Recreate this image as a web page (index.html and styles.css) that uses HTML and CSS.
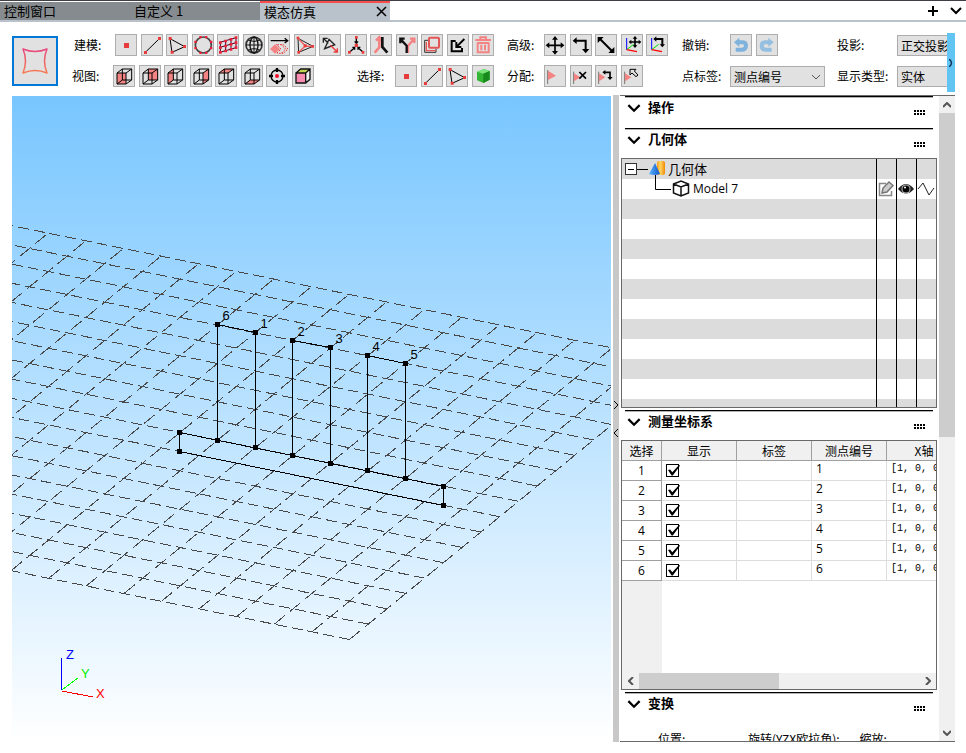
FILE: index.html
```html
<!DOCTYPE html>
<html lang="zh-CN">
<head>
  <meta charset="UTF-8">
  <meta name="viewport" content="width=device-width,initial-scale=1.0">
  <title>模态仿真</title>
  <link rel="stylesheet" href="styles.css">
</head>
<body>
  <svg class="defs" width="0" height="0">
    <symbol id="cube" viewBox="3 3 60 60">
      <path d="M12 24H39V57H12ZM12 24L28 12H56V45L39 57M39 24L56 12M12 57L28 45H56M28 12V45" fill="none" stroke="#000" stroke-width="3"/>
    </symbol>
    <symbol id="point" viewBox="3 3 60 60"><rect x="27" y="27" width="15" height="15" fill="#e83c3c"/></symbol>
    <symbol id="line" viewBox="3 3 60 60">
      <path d="M13 55L55 14" stroke="#000" stroke-width="3"/>
      <path d="M9 51h9v9h-9zM51 9h9v9h-9z" fill="#e83c3c"/>
    </symbol>
    <symbol id="tri" viewBox="3 3 60 60">
      <path d="M12 14L56 38L18 55Z" fill="none" stroke="#000" stroke-width="3"/>
      <path d="M8 9h9v9h-9zM51 33h9v9h-9zM14 50h9v9h-9z" fill="#e83c3c"/>
    </symbol>
    <symbol id="flag" viewBox="3 3 60 60">
      <path d="M11 15V57" stroke="#777" stroke-width="3"/><path d="M12 17L36 32L12 45Z" fill="#f48383"/>
    </symbol>
    <symbol id="flag-low" viewBox="3 3 60 60">
      <path d="M11 20V57" stroke="#777" stroke-width="3"/><path d="M12 25L31 37L12 49Z" fill="#f48383"/>
    </symbol>
    <symbol id="axes" viewBox="3 3 60 60">
      <path d="M17 12V47" stroke="#00f" stroke-width="3"/>
      <path d="M17 47L38 31" stroke="#0d0" stroke-width="3"/>
      <path d="M17 47L48 53" stroke="#f00" stroke-width="4"/>
    </symbol>
    <symbol id="chev" viewBox="0 0 12 8"><path d="M1 1L6 6L11 1" fill="none" stroke="currentColor" stroke-width="2"/></symbol>
    <symbol id="grip" viewBox="0 0 11 5"><path d="M0 1H11M0 4H11" stroke="#000" stroke-width="2" stroke-dasharray="2 1"/></symbol>
  </svg>

  <nav class="tabs">
    <button class="tab">控制窗口</button>
    <button class="tab">自定义 1</button>
    <button class="tab active">模态仿真
      <svg width="11" height="11" viewBox="0 0 11 11"><path d="M1 1L10 10M10 1L1 10" stroke="#000" stroke-width="1.5"/></svg>
    </button>
    <div class="tab-tools">
      <button title="新建"><svg width="10" height="10"><path d="M5 0V10M0 5H10" stroke="#000" stroke-width="2"/></svg></button>
      <button title="更多"><svg width="12" height="8"><use href="#chev"/></svg></button>
    </div>
  </nav>

  <header class="toolbar">
    <button class="logo-btn" title="模型">
      <svg width="30" height="30" viewBox="0 0 30 30">
        <defs><linearGradient id="lg" x1="0" y1="0" x2="0" y2="1"><stop offset="0" stop-color="#e8487e"/><stop offset="1" stop-color="#f77a52"/></linearGradient></defs>
        <path d="M3 3Q15 8 27 3Q22 15 27 27Q15 22 3 27Q8 15 3 3Z" fill="none" stroke="url(#lg)" stroke-width="1.5" stroke-linejoin="round"/>
      </svg>
    </button>

    <div class="group g-model">
      <div class="row">
        <span class="lbl">建模:</span>
        <div class="btns n15">
          <button class="ib"><svg><use href="#point"/></svg></button>
          <button class="ib"><svg><use href="#line"/></svg></button>
          <button class="ib"><svg><use href="#tri"/></svg></button>
          <button class="ib"><svg viewBox="3 3 60 60"><circle cx="34" cy="33" r="24" fill="none" stroke="#444" stroke-width="5"/><path d="M22 6h7v7h-7zM39 6h7v7h-7zM54 20h7v7h-7zM54 39h7v7h-7zM39 53h7v7h-7zM22 53h7v7h-7zM7 39h7v7h-7zM7 20h7v7h-7z" fill="#f0203a"/></svg></button>
          <button class="ib"><svg viewBox="3 3 60 60"><path d="M9 25L57 11M9 40L57 26M9 55L57 41M10 25V55M26 20V50M42 15V45M57 11V41" fill="none" stroke="#402" stroke-width="3"/><path d="M6 22h8v8h-8zM22 17h8v8h-8zM38 12h8v8h-8zM53 7h8v8h-8zM6 37h8v8h-8zM22 32h8v8h-8zM38 27h8v8h-8zM53 22h8v8h-8zM6 51h8v8h-8zM22 47h8v8h-8zM38 42h8v8h-8zM53 37h8v8h-8z" fill="#f0203a"/></svg></button>
          <button class="ib"><svg viewBox="3 3 60 60"><g fill="none" stroke="#111" stroke-width="4"><circle cx="33" cy="33" r="24" stroke-width="5" stroke="#333"/><ellipse cx="33" cy="33" rx="12" ry="24"/><path d="M9 33H57M15 18Q33 27 51 18M15 49Q33 39 51 49M33 9V57" stroke-width="3"/></g></svg></button>
          <button class="ib"><svg viewBox="3 3 60 60"><path d="M8 20H58M50 13L59 20L50 27" fill="none" stroke="#000" stroke-width="4"/><path d="M6 45L21 31L36 45L21 59Z" fill="#f48383"/><path d="M25 31L39 45L25 59M39 31L53 45L39 59M28 32H46L60 45L46 58H28" fill="none" stroke="#e83c3c" stroke-width="3" stroke-dasharray="5 3"/></svg></button>
          <button class="ib"><svg viewBox="3 3 60 60"><path d="M12 13L57 37L14 55Z" fill="none" stroke="#222" stroke-width="3"/><path d="M12 13L34 36L57 37M34 36L14 55" fill="none" stroke="#ee6060" stroke-width="4"/><path d="M8 8h8v8h-8zM52 33h8v8h-8zM10 51h8v8h-8zM29 31h9v9h-9z" fill="#e83c3c"/></svg></button>
          <button class="ib"><svg viewBox="3 3 60 60"><path d="M15 15L28 28M13 26V13H26M30 16L47 32L17 44Z" fill="none" stroke="#222" stroke-width="4"/><path d="M34 34L55 54M55 43V54H44" fill="none" stroke="#e83c3c" stroke-width="4"/></svg></button>
          <button class="ib"><svg viewBox="3 3 60 60"><path d="M34 12V28M14 54L28 42M54 54L40 42M29 22L34 28L39 22M22 40H29V47M46 40H39V47" fill="none" stroke="#000" stroke-width="4"/><path d="M30 6h8v8h-8zM29 29h10v10h-10zM9 51h8v8h-8zM50 51h8v8h-8z" fill="#e83c3c"/></svg></button>
          <button class="ib"><svg viewBox="3 3 60 60"><path d="M14 56L28 40V12M18 20L28 10L36 20" fill="none" stroke="#f48383" stroke-width="8"/><path d="M37 9V39L52 56" fill="none" stroke="#111" stroke-width="8"/></svg></button>
          <button class="ib"><svg viewBox="3 3 60 60"><path d="M36 57V36L53 16M42 14H55V27" fill="none" stroke="#f48383" stroke-width="7"/><path d="M32 57V35L14 16M13 28V14H26" fill="none" stroke="#111" stroke-width="7"/></svg></button>
          <button class="ib"><svg viewBox="3 3 60 60"><path d="M21 19H11V55H45V44" fill="none" stroke="#333" stroke-width="3"/><rect x="24" y="11" width="30" height="30" rx="3" fill="#e1e1e1" stroke="#e35656" stroke-width="6"/><path d="M16 24V50H44" fill="none" stroke="#e35656" stroke-width="4"/></svg></button>
          <button class="ib"><svg viewBox="3 3 60 60"><path d="M26 21H14V52H45V42M52 15L30 37M28 24V39H43" fill="none" stroke="#000" stroke-width="6"/></svg></button>
          <button class="ib"><svg viewBox="3 3 60 60"><path d="M10 18H57M25 16V10H42V16M15 27H52M17 27V55H50V27M28 32V49M39 32V49" fill="none" stroke="#f48383" stroke-width="6"/></svg></button>
        </div>
      </div>
      <div class="row">
        <span class="lbl lbl-view">视图:</span>
        <div class="btns n8">
          <button class="ib"><svg viewBox="3 3 60 60"><path d="M12 24H39V57H12Z" fill="#f48383"/><use href="#cube" x="3" y="3" width="60" height="60"/></svg></button>
          <button class="ib"><svg viewBox="3 3 60 60"><path d="M28 12H56V45H28Z" fill="#f48383"/><use href="#cube" x="3" y="3" width="60" height="60"/></svg></button>
          <button class="ib"><svg viewBox="3 3 60 60"><path d="M12 24L28 12V45L12 57Z" fill="#f48383"/><use href="#cube" x="3" y="3" width="60" height="60"/></svg></button>
          <button class="ib"><svg viewBox="3 3 60 60"><path d="M39 24L56 12V45L39 57Z" fill="#f48383"/><use href="#cube" x="3" y="3" width="60" height="60"/></svg></button>
          <button class="ib"><svg viewBox="3 3 60 60"><path d="M12 24L28 12H56L39 24Z" fill="#f48383"/><use href="#cube" x="3" y="3" width="60" height="60"/></svg></button>
          <button class="ib"><svg viewBox="3 3 60 60"><path d="M12 57L28 45H56L39 57Z" fill="#f48383"/><use href="#cube" x="3" y="3" width="60" height="60"/></svg></button>
          <button class="ib"><svg viewBox="3 3 60 60"><circle cx="33" cy="33" r="18" fill="none" stroke="#000" stroke-width="4"/><path d="M33 9V21M33 45V57M9 33H21M45 33H57" stroke="#000" stroke-width="7"/><circle cx="33" cy="33" r="6" fill="#f0102a"/></svg></button>
          <button class="ib"><svg viewBox="3 3 60 60"><path d="M12 24L26 12H54L41 24Z" fill="#c5d653"/><path d="M12 24H41V54H12Z" fill="#f78bb0"/><path d="M41 24L54 12V43L41 54Z" fill="#f0f0f0"/><path d="M12 24H41V54H12ZM12 24L26 12H54V43L41 54M41 24L54 12" fill="none" stroke="#111" stroke-width="4"/></svg></button>
        </div>
        <span class="lbl lbl-select">选择:</span>
        <div class="btns n4">
          <button class="ib"><svg><use href="#point"/></svg></button>
          <button class="ib"><svg><use href="#line"/></svg></button>
          <button class="ib"><svg><use href="#tri"/></svg></button>
          <button class="ib"><svg viewBox="3 3 60 60"><path d="M15 20L36 12L53 18V44L34 54L15 46Z" fill="#35b535"/><path d="M15 20L36 12L53 18L34 26Z" fill="#7be47b"/><path d="M34 26L53 18V44L34 54Z" fill="#178a1c"/></svg></button>
        </div>
      </div>
    </div>

    <div class="group g-adv">
      <div class="row">
        <span class="lbl">高级:</span>
        <div class="btns n5">
          <button class="ib"><svg viewBox="3 3 60 60"><path d="M33 11V57M10 34H56" stroke="#000" stroke-width="5"/><path d="M33 6L42 17H24ZM33 62L24 51H42ZM5 34L16 25V43ZM61 34L50 43V25Z"/></svg></button>
          <button class="ib"><svg viewBox="3 3 60 60"><path d="M17 20H47V47" fill="none" stroke="#000" stroke-width="6"/><path d="M8 20L20 10V30ZM47 58L36 45H58Z"/></svg></button>
          <button class="ib"><svg viewBox="3 3 60 60"><path d="M15 15L51 51" stroke="#000" stroke-width="6"/><path d="M8 9H26L8 27ZM58 57H40L58 39Z"/></svg></button>
          <button class="ib"><svg viewBox="3 3 60 60"><use href="#axes" x="3" y="3" width="60" height="60"/><path d="M42 10V38M27 24H57" stroke="#000" stroke-width="5"/><path d="M42 6L49 14H35ZM42 42L35 34H49ZM23 24L31 17V31ZM61 24L53 31V17Z"/></svg></button>
          <button class="ib"><svg viewBox="3 3 60 60"><use href="#axes" x="3" y="3" width="60" height="60"/><path d="M29 15H49V34" fill="none" stroke="#000" stroke-width="6"/><path d="M22 15L31 7V23ZM49 40L41 31H57Z"/></svg></button>
        </div>
      </div>
      <div class="row">
        <span class="lbl">分配:</span>
        <div class="btns n4">
          <button class="ib"><svg><use href="#flag"/></svg></button>
          <button class="ib"><svg viewBox="3 3 60 60"><use href="#flag-low" x="3" y="3" width="60" height="60"/><path d="M28 21L48 41M48 21L28 41" stroke="#000" stroke-width="5"/></svg></button>
          <button class="ib"><svg viewBox="3 3 60 60"><use href="#flag-low" x="3" y="3" width="60" height="60"/><path d="M29 22H45V38" fill="none" stroke="#000" stroke-width="5"/><path d="M22 22L31 15V29ZM45 45L37 36H53Z"/></svg></button>
          <button class="ib"><svg viewBox="3 3 60 60"><use href="#flag-low" x="3" y="3" width="60" height="60"/><path d="M27 13H45L40 18L51 30L45 35L33 24L27 30Z" fill="#e1e1e1" stroke="#000" stroke-width="3"/></svg></button>
        </div>
      </div>
    </div>

    <div class="group g-undo">
      <div class="row">
        <span class="lbl">撤销:</span>
        <div class="btns n2">
          <button class="ib" title="撤销"><svg viewBox="3 3 60 60"><path d="M24 25H36Q48 25 48 35Q48 47 34 47H17" fill="none" stroke="#7fb2dc" stroke-width="12"/><path d="M12 25L28 11V39Z" fill="#7fb2dc"/></svg></button>
          <button class="ib" title="重做"><svg viewBox="3 3 60 60"><path d="M40 25H28Q17 25 17 35Q17 47 30 47H47" fill="none" stroke="#94bfe0" stroke-width="12"/><path d="M53 25L37 11V39Z" fill="#94bfe0"/></svg></button>
        </div>
      </div>
      <div class="row">
        <label class="lbl" for="ptLabel">点标签:</label>
        <div class="pick">
          <select id="ptLabel"><option>测点编号</option></select>
          <svg class="pick-arrow" width="10" height="6" viewBox="0 0 10 6"><path d="M1 1L5 5L9 1" fill="none" stroke="#555"/></svg>
        </div>
      </div>
    </div>

    <div class="group g-proj">
      <div class="row">
        <label class="lbl" for="proj">投影:</label>
        <div class="pick"><select id="proj"><option>正交投影</option></select></div>
      </div>
      <div class="row">
        <label class="lbl" for="showType">显示类型:</label>
        <div class="pick"><select id="showType"><option>实体</option></select></div>
      </div>
      <button class="more" title="展开"><svg width="4" height="8" viewBox="0 0 4 8"><path d="M0 0Q5 4 0 8" fill="none" stroke="#135" stroke-width="1.5"/></svg></button>
    </div>
  </header>

  <main class="work">
    <div class="view3d">
      <svg id="scene" width="100%" height="100%">
        <g id="grid" class="grid-lines"></g>
        <g id="model" class="model"></g>
        <g class="axis">
          <path d="M49.5 562V594" stroke="#00f"/>
          <path d="M50 594L66 582" stroke="#0f0"/>
          <path d="M50 595L81 601" stroke="#f00"/>
          <text x="54" y="563" fill="#00f">Z</text>
          <text x="69" y="582" fill="#0e0">Y</text>
          <text x="84" y="602" fill="#f00">X</text>
        </g>
      </svg>
    </div>

    <div class="splitter">
      <svg width="6" height="38" viewBox="0 0 6 38"><path d="M1 1L5 5L1 9M5 29L1 33L5 37" fill="none" stroke="#000"/></svg>
    </div>

    <aside class="side">
      <div class="side-body">
        <section>
          <h2 class="sec-head"><svg class="fold" width="14" height="9"><use href="#chev"/></svg>操作<svg class="grip" width="11" height="5"><use href="#grip"/></svg></h2>
        </section>

        <section>
          <h2 class="sec-head"><svg class="fold" width="14" height="9"><use href="#chev"/></svg>几何体<svg class="grip" width="11" height="5"><use href="#grip"/></svg></h2>
          <div class="tree">
            <div class="tree-row">
              <svg width="45" height="20" viewBox="0 0 45 20">
                <defs>
                  <linearGradient id="cone"><stop offset="0" stop-color="#5ab4ff"/><stop offset="1" stop-color="#1257c8"/></linearGradient>
                  <linearGradient id="tube"><stop offset="0" stop-color="#f79a10"/><stop offset=".4" stop-color="#ffd768"/><stop offset="1" stop-color="#f08a00"/></linearGradient>
                </defs>
                <rect x="3.5" y="4.5" width="11" height="11" fill="#fff" stroke="#333"/>
                <path d="M6 10.5H12M15 10.5H26M33.5 16V20" stroke="#000"/>
                <rect x="35" y="2" width="8" height="14" rx="2" fill="url(#tube)"/>
                <path d="M27 15L33 4L38 15Q33 17 27 15Z" fill="url(#cone)"/>
              </svg>
              <span class="tree-name">几何体</span>
            </div>
            <div class="tree-row">
              <svg width="70" height="20" viewBox="0 0 70 20">
                <path d="M33.5 0V10.5H49" fill="none" stroke="#000"/>
                <path d="M51.5 5L59 2L66.500 5V14L59 17L51.500 14ZM51.500 5L59 8L66.500 5M59 8V17" fill="none" stroke="#111" stroke-width="1.5"/>
              </svg>
              <span class="tree-name">Model 7</span>
              <div class="tree-icons">
                <svg width="20" height="20" viewBox="0 0 20 20"><path d="M10 4.500H3.500V16.500H15.500V12" fill="none" stroke="#888" stroke-width="1.5"/><path d="M6 14L7 9L13 3L17 6.500L11 13Z" fill="#ccc" stroke="#777" stroke-width="1.5"/></svg>
                <svg width="20" height="20" viewBox="0 0 20 20"><path d="M2 10Q10 0 18 10Q10 19 2 10Z" fill="#222"/><circle cx="10" cy="10" r="4.500" fill="#bbb"/><circle cx="10" cy="10" r="3.500" fill="#000"/><circle cx="9" cy="8.500" r="1" fill="#fff"/></svg>
                <svg width="20" height="20" viewBox="0 0 20 20"><path d="M2 10L7 4L13 16L18 9" fill="none" stroke="#222"/></svg>
              </div>
            </div>
          </div>
        </section>

        <section>
          <h2 class="sec-head"><svg class="fold" width="14" height="9"><use href="#chev"/></svg>测量坐标系<svg class="grip" width="11" height="5"><use href="#grip"/></svg></h2>
          <div class="coords">
            <div class="coords-body">
              <table>
                <thead>
                  <tr><th class="c-no">选择</th><th>显示</th><th>标签</th><th>测点编号</th><th>X轴</th></tr>
                </thead>
                <tbody>
                  <tr><th>1</th><td><input type="checkbox" aria-label="显示 1" checked></td><td></td><td>1</td><td class="vec">[1, 0, 0]</td></tr>
                  <tr><th>2</th><td><input type="checkbox" aria-label="显示 2" checked></td><td></td><td>2</td><td class="vec">[1, 0, 0]</td></tr>
                  <tr><th>3</th><td><input type="checkbox" aria-label="显示 3" checked></td><td></td><td>3</td><td class="vec">[1, 0, 0]</td></tr>
                  <tr><th>4</th><td><input type="checkbox" aria-label="显示 4" checked></td><td></td><td>4</td><td class="vec">[1, 0, 0]</td></tr>
                  <tr><th>5</th><td><input type="checkbox" aria-label="显示 5" checked></td><td></td><td>5</td><td class="vec">[1, 0, 0]</td></tr>
                  <tr><th>6</th><td><input type="checkbox" aria-label="显示 6" checked></td><td></td><td>6</td><td class="vec">[1, 0, 0]</td></tr>
                </tbody>
              </table>
            </div>
            <div class="hbar">
              <button><svg width="6" height="8" viewBox="0 0 6 8"><path d="M5 0L1 4L5 8" fill="none" stroke="#555" stroke-width="2"/></svg></button>
              <div class="hbar-thumb"></div>
              <button class="bar-end"><svg width="6" height="8" viewBox="0 0 6 8"><path d="M1 0L5 4L1 8" fill="none" stroke="#555" stroke-width="2"/></svg></button>
            </div>
          </div>
        </section>

        <section>
          <h2 class="sec-head"><svg class="fold" width="14" height="9"><use href="#chev"/></svg>变换<svg class="grip" width="11" height="5"><use href="#grip"/></svg></h2>
          <div class="trans"><span>位置:</span><span>旋转(YZX欧拉角):</span><span>缩放:</span></div>
        </section>
      </div>

      <div class="vbar">
        <button><svg width="8" height="6" viewBox="0 0 8 6"><path d="M0 5L4 1L8 5" fill="none" stroke="#555" stroke-width="2"/></svg></button>
        <div class="vbar-thumb"></div>
        <button class="bar-end"><svg width="8" height="6" viewBox="0 0 8 6"><path d="M0 1L4 5L8 1" fill="none" stroke="#555" stroke-width="2"/></svg></button>
      </div>
    </aside>
  </main>
  <script src="script.js"></script>
</body>
</html>
```
FILE: styles.css
```css
:root {
  --line: #b9c2ca;
  --btn: #e1e1e1;
  --btn-line: #adadad;
  --frame: #696969;
  --thumb: #cdcdcd;
  --track: #f0f0f0;
}
* { box-sizing: border-box; }
html, body { height: 100%; }
body {
  margin: 0;
  display: flex;
  flex-direction: column;
  background: #fff;
  color: #000;
  font-family: "Noto Sans CJK SC", sans-serif;
  font-size: 12px;
  line-height: 16px;
  overflow: hidden;
}
button, select, input { font: inherit; color: inherit; margin: 0; }
button { padding: 0; border: none; background: none; }
svg { display: block; flex-shrink: 0; }
.defs { position: absolute; }

/* tabs */
.tabs {
  display: flex;
  height: 22px;
  flex-shrink: 0;
  border-top: 1px solid #3f3f46;
  border-bottom: 2px solid var(--line);
}
.tab {
  width: 130px;
  display: flex;
  align-items: center;
  padding: 0 4px;
  margin-top: 1px;
  background: #868b8f;
  font-size: 13px;
}
.tab.active {
  margin-top: 0;
  background: var(--line);
  border-top: 2px solid #f94d4d;
  justify-content: space-between;
}
.tab.active svg { margin-right: -1px; }
.tab-tools {
  margin-left: auto;
  padding-right: 4px;
  display: flex;
  align-items: center;
  gap: 12px;
}

/* toolbar */
.toolbar {
  display: flex;
  flex-shrink: 0;
  height: 73px;
  padding: 12px 11px 8px 12px;
}
.logo-btn {
  width: 46px;
  height: 50px;
  margin: 2px 14px 0 0;
  flex-shrink: 0;
  display: flex;
  align-items: center;
  justify-content: center;
  background: var(--btn);
  border: 2px solid #0078d7;
}
.group { display: flex; flex-direction: column; gap: 9px; flex-shrink: 0; }
.row { display: flex; align-items: center; height: 22px; white-space: nowrap; }
.g-model { width: 422px; margin-right: 13px; }
.g-adv { width: 161px; margin-right: 14px; }
.g-undo { width: 143px; margin-right: 12px; }
.g-proj { position: relative; flex: 1; min-width: 0; }
.g-model .lbl { width: 43px; padding-left: 2px; }
.g-model .lbl-view { width: 41px; padding-left: 0; }
.g-model .lbl-select { width: 38px; padding: 0; margin-left: auto; }
.g-adv .lbl { width: 37px; }
.g-undo .lbl { width: 48px; }
.g-proj .lbl { width: 60px; }
.btns { display: flex; justify-content: space-between; }
.n15 { width: 379px; }
.n8 { width: 201px; }
.n5 { width: 124px; }
.n4 { width: 99px; }
.n2 { width: 48px; }
.ib {
  width: 22px;
  height: 22px;
  background: var(--btn);
  border: 1px solid var(--btn-line);
}
.ib svg { width: 20px; height: 20px; }
.ib:hover { background: #e5f1fb; border-color: #0078d7; }
.pick { position: relative; flex: 1; min-width: 0; }
.pick select {
  appearance: none;
  display: block;
  width: 100%;
  height: 21px;
  padding: 1px 3px 0;
  border: 1px solid var(--btn-line);
  border-radius: 0;
  background: var(--btn);
}
.g-proj .pick select { border-right: none; padding-right: 0; }
.pick-arrow { position: absolute; right: 4px; top: 8px; }
.more {
  position: absolute;
  right: 0;
  top: -1px;
  width: 8px;
  height: 59px;
  display: flex;
  align-items: center;
  justify-content: center;
  background: #62c4f2;
}

/* work area */
.work { flex: 1; min-height: 0; display: flex; padding: 0 11px 11px 12px; }
.view3d {
  flex: 1;
  min-width: 0;
  margin: 1px 2px 0 0;
  background: linear-gradient(#78c6ff, #fff);
}
.grid-lines { fill: none; stroke: #484848; stroke-width: 1; shape-rendering: crispEdges; }
.grid-lines .u { stroke-dasharray: 11 5; }
.grid-lines .v { stroke-dasharray: 14 6; }
.model line { stroke: #000; stroke-width: 1; shape-rendering: crispEdges; }
.model text, .axis text { font: 13px "Liberation Sans", sans-serif; }
.axis path { fill: none; shape-rendering: crispEdges; }
.splitter {
  width: 6px;
  display: flex;
  align-items: center;
  background: #c8c8c8;
  margin-right: 1px;
}
.side {
  width: 335px;
  display: flex;
  border-top: 1px solid var(--frame);
  border-bottom: 1px solid var(--frame);
}
.side-body { flex: 1; min-width: 0; padding: 0 2px 0 1px; overflow: hidden; }
section + section { margin-top: 2px; }
.sec-head {
  display: flex;
  align-items: center;
  height: 30px;
  margin: 0 4px;
  padding: 0 8px 10px 2px;
  border-top: 1px solid #000;
  box-shadow: inset 0 1px #b4b4b4;
  font-size: 13px;
  font-weight: bold;
  gap: 7px;
}
.fold { margin-top: 3px; }
.grip { margin: 12px 0 0 auto; }

/* geometry tree */
.tree {
  height: 250px;
  border: 1px solid var(--frame);
  background:
    linear-gradient(#000, #000) right 59px top / 1px 100% no-repeat,
    linear-gradient(#000, #000) right 39px top / 1px 100% no-repeat,
    linear-gradient(#000, #000) right 19px top / 1px 100% no-repeat,
    repeating-linear-gradient(#dcdcdc 0 20px, #fff 20px 40px);
}
.tree-row { display: flex; align-items: center; height: 20px; font-size: 13px; }
.tree-row + .tree-row { font-family: "Open Sans", sans-serif; font-size: 12px; }
.tree-name { margin-left: 1px; }
.tree-icons { display: flex; margin-left: auto; }

/* coordinate table */
.coords {
  height: 250px;
  display: flex;
  flex-direction: column;
  border: 1px solid var(--frame);
}
.coords-body {
  flex: 1;
  overflow: hidden;
  background: linear-gradient(var(--track), var(--track)) left top / 40px 100% no-repeat;
}
.coords table {
  width: 340px;
  table-layout: fixed;
  border-collapse: separate;
  border-spacing: 0;
}
.coords th, .coords td {
  height: 20px;
  padding: 0;
  line-height: 16px;
  border-right: 1px solid #dcdcdc;
  border-bottom: 1px solid #dcdcdc;
  background: #fff;
  font-weight: normal;
  text-align: left;
}
.coords th { text-align: center; border-color: #a0a0a0; }
.coords thead th { background: var(--track); }
.coords .c-no { width: 40px; }
.coords td { padding-left: 4px; vertical-align: top; }
.coords tbody { font-family: "Open Sans", sans-serif; }
.coords .vec { font: 10px/16px "Liberation Mono", monospace; white-space: nowrap; }
.coords input {
  appearance: none;
  display: block;
  position: relative;
  width: 13px;
  height: 13px;
  margin-top: 3px;
  border: 1px solid #000;
  background: #fff;
}
.coords input:checked::before {
  content: "";
  position: absolute;
  inset: 0 -2px 0 1px;
  background: #000;
  clip-path: polygon(0 45%, 18% 40%, 36% 66%, 92% 0, 100% 6%, 40% 96%, 30% 96%);
}

/* scroll bars */
.hbar, .vbar { display: flex; background: var(--track); }
.hbar { height: 16px; }
.hbar button { width: 17px; }
.hbar-thumb { width: 140px; background: var(--thumb); }
.hbar button, .vbar button { display: flex; align-items: center; justify-content: center; }
.vbar { width: 16px; flex-direction: column; }
.vbar button { height: 17px; }
.vbar-thumb { height: 324px; background: var(--thumb); }
.hbar .bar-end { margin-left: auto; }
.vbar .bar-end { margin-top: auto; }

.trans { display: flex; gap: 20px; padding: 9px 0 0 37px; white-space: nowrap; }
.trans span:first-child { width: 70px; }
```
FILE: script.js
```js
const NS = 'http://www.w3.org/2000/svg';
const grid = document.getElementById('grid');
const model = document.getElementById('model');

function add(parent, tag, attrs, text) {
  const el = document.createElementNS(NS, tag);
  for (const k in attrs) el.setAttribute(k, attrs[k]);
  if (text) el.textContent = text;
  parent.appendChild(el);
}

// ground plane: near corner and the two cell vectors
const origin = [337.5, 543.5];
const u = [-37.6, -7.65];
const v = [18.77, -15.35];
const COLS = 27, ROWS = 18;

function at(i, j) {
  return [origin[0] + u[0] * i + v[0] * j, origin[1] + u[1] * i + v[1] * j];
}
function gridLine(a, b, cls) {
  add(grid, 'line', { x1: a[0], y1: a[1], x2: b[0], y2: b[1], class: cls });
}
for (let j = 0; j <= ROWS; j++) gridLine(at(0, j), at(COLS, j), 'u');
for (let i = 0; i <= COLS; i++) gridLine(at(i, 0), at(i, ROWS), 'v');

// measured structure
const posts = [
  { n: 6, x: 205.5, top: 228.5, foot: 344.5 },
  { n: 1, x: 243.5, top: 236.5, foot: 351.5 },
  { n: 2, x: 280.5, top: 244.5, foot: 359.5 },
  { n: 3, x: 318.5, top: 251.5, foot: 367.5 },
  { n: 4, x: 355.5, top: 259.5, foot: 374.5 },
  { n: 5, x: 393.5, top: 267.5, foot: 382.5 }
];
function edge(x1, y1, x2, y2) { add(model, 'line', { x1, y1, x2, y2 }); }
function node(x, y) { add(model, 'rect', { x: x - 2.5, y: y - 2.5, width: 5, height: 5 }); }

edge(167.5, 336.5, 431.5, 390.5);
edge(167.5, 355.5, 431.5, 409.5);
edge(167.5, 336.5, 167.5, 355.5);
edge(431.5, 390.5, 431.5, 409.5);
[[167.5, 336.5], [167.5, 355.5], [431.5, 390.5], [431.5, 409.5]].forEach(p => node(p[0], p[1]));

posts.forEach((p, i) => {
  edge(p.x, p.top, p.x, p.foot);
  if (i % 2 === 0) edge(p.x, p.top, posts[i + 1].x, posts[i + 1].top);
  node(p.x, p.top);
  node(p.x, p.foot);
  add(model, 'text', { x: p.x + 5, y: p.top - 5 }, String(p.n));
});
```
